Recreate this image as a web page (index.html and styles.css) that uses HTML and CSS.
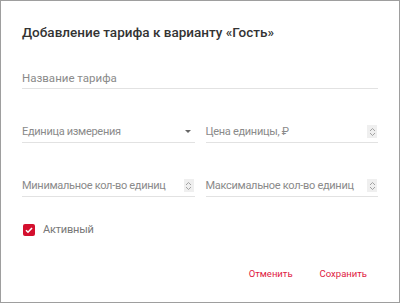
FILE: index.html
```html
<!DOCTYPE html>
<html lang="ru">
<head>
  <meta charset="UTF-8" />
  <meta name="viewport" content="width=device-width, initial-scale=1.0"/>
  <title>Добавление тарифа</title>
  <link rel="stylesheet" href="styles.css">
</head>
<body>
  <div class="dialog">
    <h1 class="title">Добавление тарифа к варианту «Гость»</h1>

    <div class="row">
      <div class="field">
        <span class="label wide">Название тарифа</span>
      </div>
    </div>

    <div class="row two">
      <div class="field">
        <span class="label">Единица измерения</span>
        <span class="arrow"></span>
      </div>
      <div class="field">
        <span class="label">Цена единицы, ₽</span>
        <span class="spin">
          <svg width="7" height="10" viewBox="0 0 7 10"><path d="M1 4 L3.5 1.5 L6 4 M1 6 L3.5 8.5 L6 6" fill="none" stroke="#9a9a9a" stroke-width="0.9"/></svg>
        </span>
      </div>
    </div>

    <div class="row two">
      <div class="field">
        <span class="label">Минимальное кол-во единиц</span>
        <span class="spin">
          <svg width="7" height="10" viewBox="0 0 7 10"><path d="M1 4 L3.5 1.5 L6 4 M1 6 L3.5 8.5 L6 6" fill="none" stroke="#9a9a9a" stroke-width="0.9"/></svg>
        </span>
      </div>
      <div class="field">
        <span class="label">Максимальное кол-во единиц</span>
        <span class="spin">
          <svg width="7" height="10" viewBox="0 0 7 10"><path d="M1 4 L3.5 1.5 L6 4 M1 6 L3.5 8.5 L6 6" fill="none" stroke="#9a9a9a" stroke-width="0.9"/></svg>
        </span>
      </div>
    </div>

    <label class="check">
      <span class="box">
        <svg width="10" height="10" viewBox="0 0 10 10"><path d="M2 5.2 L4 7.2 L8 3" fill="none" stroke="#fff" stroke-width="1.6"/></svg>
      </span>
      Активный
    </label>

    <div class="actions">
      <button class="btn">Отменить</button>
      <button class="btn">Сохранить</button>
    </div>
  </div>
</body>
</html>
```

FILE: styles.css
```css
body {
  margin: 0;
  font-family: Roboto, "Noto Sans", sans-serif;
  background: #fff;
}

.dialog {
  box-sizing: border-box;
  width: 400px;
  height: 303px;
  border: 1px solid #9e9e9e;
  padding: 21px 21px 0 21px;
}

.title {
  margin: 0;
  font-size: 13.5px;
  font-weight: 500;
  color: #333;
  line-height: 20px;
}

.row {
  display: flex;
  gap: 11px;
  margin-top: 25px;
}

.row.two {
  margin-top: 32px;
}

.field {
  flex: 1;
  display: flex;
  align-items: center;
  justify-content: space-between;
  height: 21px;
  border-bottom: 1px solid #e2e2e2;
}

.label {
  font-size: 11px;
  letter-spacing: -0.3px;
  color: #8a8a8a;
  white-space: nowrap;
}

.label.wide {
  font-size: 11.5px;
  letter-spacing: 0;
}

.arrow {
  width: 0;
  height: 0;
  border-left: 3.5px solid transparent;
  border-right: 3.5px solid transparent;
  border-top: 3.5px solid #666;
  margin-right: 4px;
}

.spin {
  display: flex;
  align-items: center;
  justify-content: center;
  width: 10px;
  height: 13px;
  background: #efefef;
  margin-right: 1px;
}

.check {
  display: flex;
  align-items: center;
  gap: 8px;
  margin-top: 26px;
  margin-left: 1px;
  font-size: 11px;
  letter-spacing: -0.2px;
  color: #777;
}

.box {
  display: flex;
  align-items: center;
  justify-content: center;
  width: 12px;
  height: 12px;
  border-radius: 2px;
  background: #d4102e;
}

.actions {
  display: flex;
  justify-content: flex-end;
  gap: 7px;
  margin-top: 28px;
  margin-right: 1px;
}

.btn {
  background: none;
  border: none;
  font-family: inherit;
  font-size: 9.5px;
  color: #e0203f;
  padding: 4px 10px;
}
```
